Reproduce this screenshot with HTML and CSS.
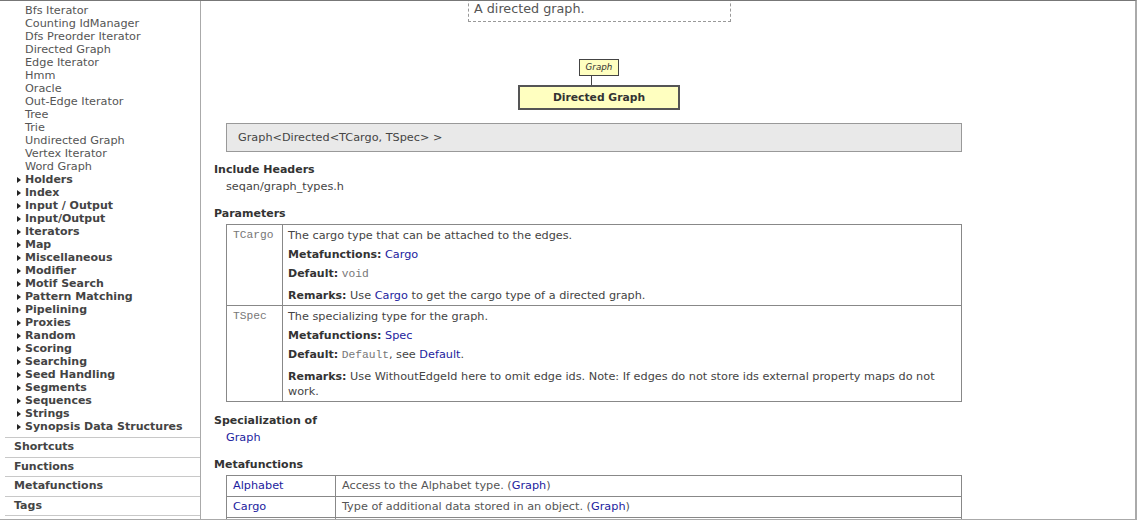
FILE: index.html
```html
<!DOCTYPE html>
<html lang="en">
<head>
<meta charset="utf-8">
<title>Directed Graph</title>
<link rel="stylesheet" href="styles.css">
</head>
<body>
<div class="frame">
  <nav class="sidebar">
    <ul class="tree">
      <li class="leaf">Bfs Iterator</li>
      <li class="leaf">Counting IdManager</li>
      <li class="leaf">Dfs Preorder Iterator</li>
      <li class="leaf">Directed Graph</li>
      <li class="leaf">Edge Iterator</li>
      <li class="leaf">Hmm</li>
      <li class="leaf">Oracle</li>
      <li class="leaf">Out-Edge Iterator</li>
      <li class="leaf">Tree</li>
      <li class="leaf">Trie</li>
      <li class="leaf">Undirected Graph</li>
      <li class="leaf">Vertex Iterator</li>
      <li class="leaf">Word Graph</li>
      <li class="cat"><span class="tri"></span>Holders</li>
      <li class="cat"><span class="tri"></span>Index</li>
      <li class="cat"><span class="tri"></span>Input / Output</li>
      <li class="cat"><span class="tri"></span>Input/Output</li>
      <li class="cat"><span class="tri"></span>Iterators</li>
      <li class="cat"><span class="tri"></span>Map</li>
      <li class="cat"><span class="tri"></span>Miscellaneous</li>
      <li class="cat"><span class="tri"></span>Modifier</li>
      <li class="cat"><span class="tri"></span>Motif Search</li>
      <li class="cat"><span class="tri"></span>Pattern Matching</li>
      <li class="cat"><span class="tri"></span>Pipelining</li>
      <li class="cat"><span class="tri"></span>Proxies</li>
      <li class="cat"><span class="tri"></span>Random</li>
      <li class="cat"><span class="tri"></span>Scoring</li>
      <li class="cat"><span class="tri"></span>Searching</li>
      <li class="cat"><span class="tri"></span>Seed Handling</li>
      <li class="cat"><span class="tri"></span>Segments</li>
      <li class="cat"><span class="tri"></span>Sequences</li>
      <li class="cat"><span class="tri"></span>Strings</li>
      <li class="cat"><span class="tri"></span>Synopsis Data Structures</li>
    </ul>
    <div class="sect">Shortcuts</div>
    <div class="sect">Functions</div>
    <div class="sect">Metafunctions</div>
    <div class="sect">Tags</div>
    <div class="sect">Typedefs</div>
  </nav>
  <main class="content">
    <div class="inner">
      <div class="desc">A directed graph.</div>

      <div class="diagram">
        <div class="node-small">Graph</div>
        <div class="edge"></div>
        <div class="node-main">Directed Graph</div>
      </div>

      <div class="signature">Graph&lt;Directed&lt;TCargo, TSpec&gt; &gt;</div>

      <div class="h">Include Headers</div>
      <div class="line">seqan/graph_types.h</div>

      <div class="h h-gap">Parameters</div>
      <table class="ptable">
        <colgroup><col class="pc1"><col></colgroup>
        <tr>
          <td class="pname">TCargo</td>
          <td class="pdesc">
            <p>The cargo type that can be attached to the edges.</p>
            <p><b>Metafunctions:</b> <a href="#">Cargo</a></p>
            <p><b>Default:</b> <span class="mono">void</span></p>
            <p class="remarks"><b>Remarks:</b> Use <a href="#">Cargo</a> to get the cargo type of a directed graph.</p>
          </td>
        </tr>
        <tr>
          <td class="pname">TSpec</td>
          <td class="pdesc">
            <p>The specializing type for the graph.</p>
            <p><b>Metafunctions:</b> <a href="#">Spec</a></p>
            <p><b>Default:</b> <span class="mono">Default</span>, see <a href="#">Default</a>.</p>
            <p class="remarks"><b>Remarks:</b> Use WithoutEdgeId here to omit edge ids. Note: If edges do not store ids external property maps do not work.</p>
          </td>
        </tr>
      </table>

      <div class="h h-sm">Specialization of</div>
      <div class="line"><a href="#">Graph</a></div>

      <div class="h h-gap">Metafunctions</div>
      <table class="mtable">
        <colgroup><col class="mc1"><col></colgroup>
        <tr><td><a href="#">Alphabet</a></td><td>Access to the Alphabet type. (<a href="#">Graph</a>)</td></tr>
        <tr><td><a href="#">Cargo</a></td><td>Type of additional data stored in an object. (<a href="#">Graph</a>)</td></tr>
        <tr><td><a href="#">EdgeDescriptor</a></td><td>Type of an object that represents an edge descriptor. (<a href="#">Graph</a>)</td></tr>
        <tr><td><a href="#">EdgeType</a></td><td>Edge type of a graph object. (<a href="#">Graph</a>)</td></tr>
      </table>
    </div>
  </main>
</div>
</body>
</html>
```
FILE: styles.css
```css
html, body {
  margin: 0;
  padding: 0;
  background: #fff;
}

.frame {
  width: 1137px;
  height: 520px;
  box-sizing: border-box;
  border-top: 1px solid #777;
  border-right: 2px solid #aaa;
  border-bottom: 1px solid #aaa;
  display: flex;
  overflow: hidden;
  font-family: "DejaVu Sans", Verdana, sans-serif;
  color: #444;
}

/* ---------- sidebar ---------- */
.sidebar {
  width: 200px;
  flex: none;
  border-right: 1px solid #aaa;
}

.tree {
  list-style: none;
  margin: 0;
  padding: 3px 0 4px;
}

.tree li {
  height: 13px;
  line-height: 13px;
  white-space: nowrap;
}

.leaf {
  padding-left: 25px;
  font-size: 11.25px;
  color: #555;
}

.cat {
  padding-left: 17px;
  font-size: 11px;
  font-weight: bold;
  color: #444;
}

.tri {
  display: inline-block;
  width: 0;
  height: 0;
  border-left: 4px solid #222;
  border-top: 3.5px solid transparent;
  border-bottom: 3.5px solid transparent;
  margin-right: 4px;
  vertical-align: 0;
}

.sect {
  margin-left: 5px;
  border-top: 1px solid #c8c8c8;
  line-height: 18.5px;
  padding-left: 9px;
  font-size: 11px;
  font-weight: bold;
  color: #444;
}

/* ---------- content ---------- */
.content {
  flex: 1;
  min-width: 0;
  overflow: hidden;
}

.inner {
  width: 770px;
  padding-left: 13px;
  font-size: 11.25px;
  line-height: 13px;
  color: #444;
}

a {
  color: #1c1c9e;
  text-decoration: none;
}

.desc {
  width: 263px;
  box-sizing: border-box;
  margin: -8px 0 0 254px;
  border: 1px dashed #999;
  padding: 8px 6px 6px 5px;
  font-size: 12.75px;
  line-height: 13px;
  color: #555;
}

.diagram {
  display: flex;
  flex-direction: column;
  align-items: center;
  margin-top: 37px;
}

.node-small {
  width: 40px;
  height: 17px;
  box-sizing: border-box;
  border: 1px solid #444;
  background: #ffffc0;
  text-align: center;
  font-size: 8.75px;
  font-style: italic;
  line-height: 15px;
  color: #333;
}

.edge {
  width: 1px;
  height: 9px;
  background: #444;
  margin-right: 15px;
}

.node-main {
  width: 162px;
  height: 25px;
  box-sizing: border-box;
  border: 2px solid #555;
  background: #ffffc0;
  text-align: center;
  line-height: 21px;
  font-size: 10.75px;
  font-weight: bold;
  color: #333;
}

.signature {
  margin: 13px 0 0 12px;
  width: 736px;
  box-sizing: border-box;
  border: 1px solid #999;
  background: #e9e9e9;
  padding: 7px 11px;
  line-height: 13px;
}

.h {
  margin-top: 11px;
  font-size: 11px;
  font-weight: bold;
  line-height: 14px;
  color: #333;
}

.h-gap {
  margin-top: 14px;
}

.h-sm {
  margin-top: 12px;
}

.line {
  margin: 3px 0 0 12px;
  line-height: 13px;
}

b {
  font-size: 11px;
  color: #333;
}

.mono {
  font-family: "Liberation Mono", "Courier New", monospace;
  font-size: 11.25px;
  color: #777;
}

.ptable,
.mtable {
  margin: 3px 0 0 12px;
  width: 736px;
  border-collapse: collapse;
  table-layout: fixed;
}

.ptable td,
.mtable td {
  border: 1px solid #888;
  vertical-align: top;
  line-height: 15px;
}

.pc1 {
  width: 56px;
}

.mc1 {
  width: 109px;
}

.pname {
  padding: 3px 6px 2px;
  font-family: "Liberation Mono", "Courier New", monospace;
  font-size: 11.25px;
  color: #777;
}

.pdesc {
  padding: 3px 5px 2px;
}

.pdesc p {
  margin: 0;
}

.pdesc p + p {
  margin-top: 4px;
}

.pdesc p.remarks {
  margin-top: 6px;
}

.mtable td {
  padding: 2px 6px 3px;
  color: #555;
}
```
